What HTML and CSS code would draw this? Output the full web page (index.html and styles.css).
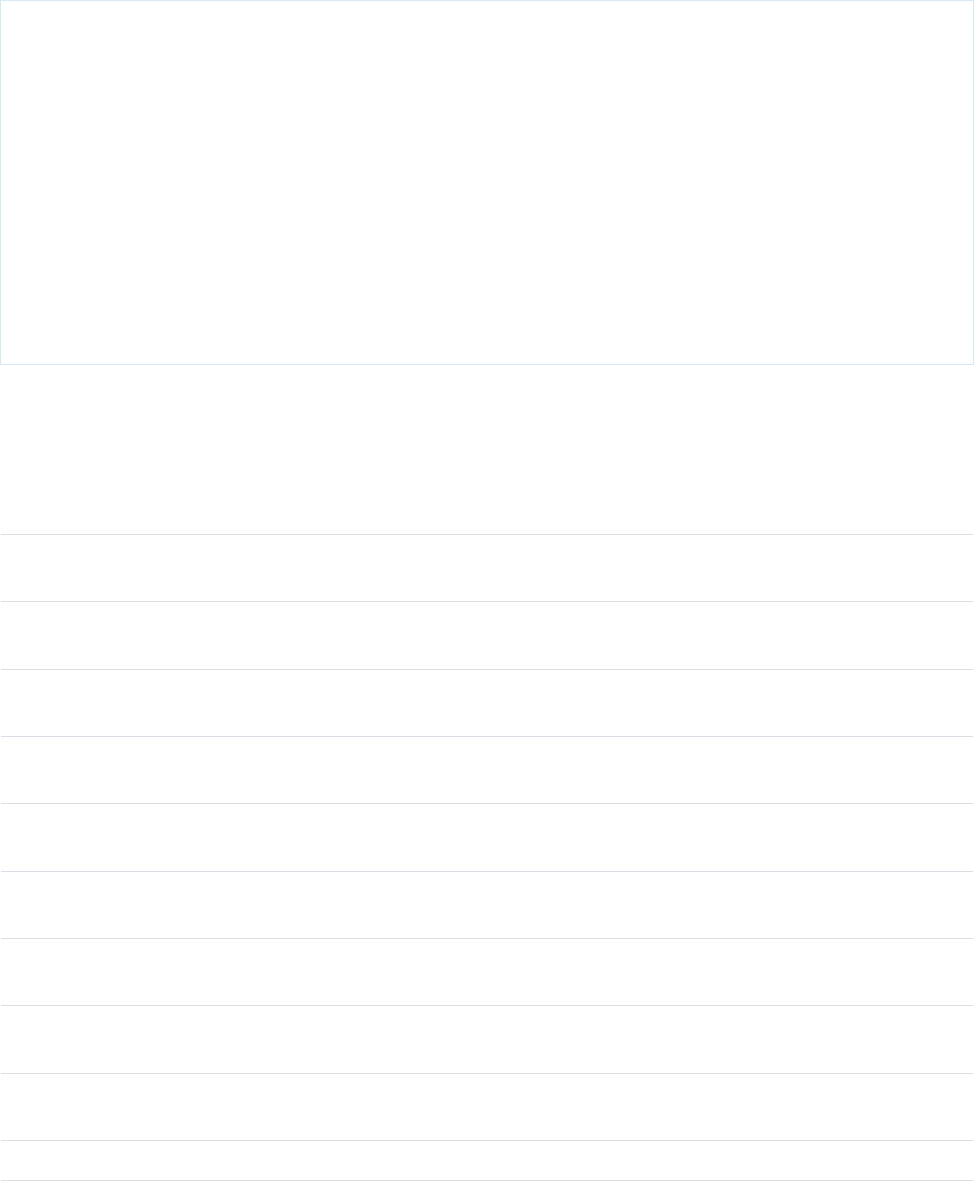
FILE: index.html
```html
<!DOCTYPE html>
<html lang="en">

<head>
    <meta charset="UTF-8">
    <meta name="viewport" content="width=device-width, initial-scale=1.0">
    <title>List</title>
    <link rel="stylesheet" href="styles.css">
</head>

<body>
    <div class="panel"></div>

    <div class="rows">
        <div class="row"></div>
        <div class="row"></div>
        <div class="row"></div>
        <div class="row"></div>
        <div class="row"></div>
        <div class="row"></div>
        <div class="row"></div>
        <div class="row"></div>
        <div class="row"></div>
        <div class="row last"></div>
    </div>
</body>

</html>
```

FILE: styles.css
```css
* {
    margin: 0;
    padding: 0;
    box-sizing: border-box;
}

body {
    background: #ffffff;
    font-family: 'Liberation Sans', Arial, sans-serif;
    color: #16325c;
}

.panel {
    height: 365px;
    border: 1px solid #d4ebf5;
}

.rows {
    margin: 169px 1px 0 1px;
}

.row {
    height: 67.33px;
    border-top: 1px solid #d8dde6;
}

.row.last {
    height: 41px;
    border-bottom: 1px solid #d8dde6;
}
```
